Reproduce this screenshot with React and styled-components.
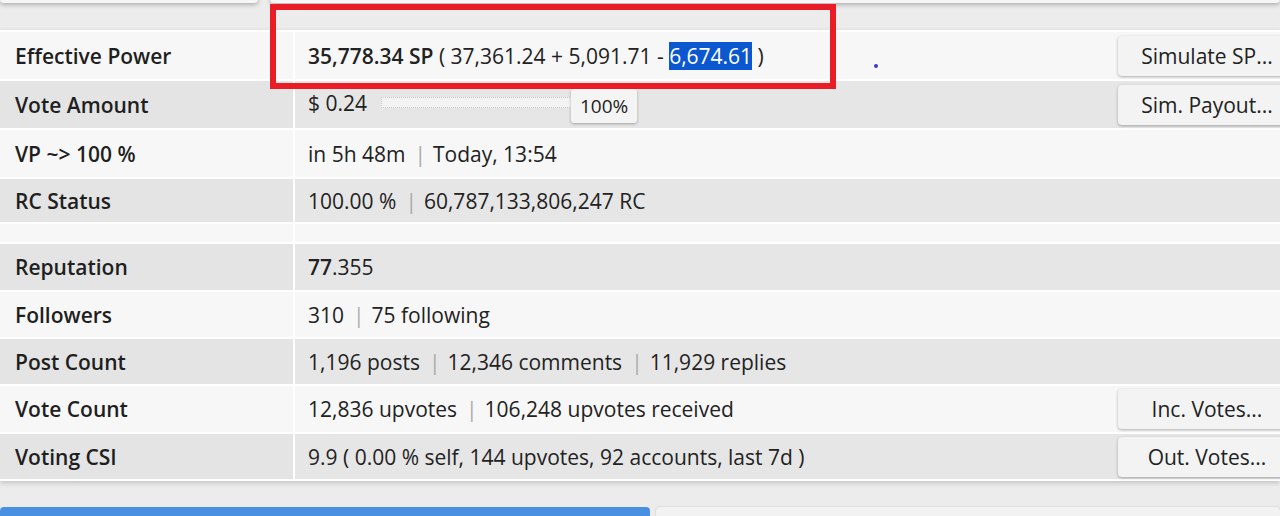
import React from 'react'
import styled, { createGlobalStyle } from 'styled-components';

const Global = createGlobalStyle`
    html, body{
        margin:0;
        padding:0;
        background:#ececec;
        overflow:hidden;
    }
    body{
        font-family:"Open Sans","Noto Sans",sans-serif;
        color:#222;
    }
`;

const rows = [
    { label: 'Effective Power', h: 47, light: true, button: 'Simulate SP...', kind: 'power' },
    { label: 'Vote Amount', h: 47, button: 'Sim. Payout...', kind: 'vote' },
    { label: 'VP ~> 100 %', h: 47, light: true, parts: ['in 5h 48m', 'Today, 13:54'] },
    { label: 'RC Status', h: 43, parts: ['100.00 %', '60,787,133,806,247 RC'] },
    { spacer: true, h: 18, light: true },
    { label: 'Reputation', h: 46, kind: 'rep' },
    { label: 'Followers', h: 45, light: true, parts: ['310', '75 following'] },
    { label: 'Post Count', h: 45, parts: ['1,196 posts', '12,346 comments', '11,929 replies'] },
    { label: 'Vote Count', h: 46, light: true, parts: ['12,836 upvotes', '106,248 upvotes received'], button: 'Inc. Votes...' },
    { label: 'Voting CSI', h: 45, parts: ['9.9 ( 0.00 % self, 144 upvotes, 92 accounts, last 7d )'], button: 'Out. Votes...' },
];

const Parts = ({ parts }) => (
    <span>
        {parts.map((p, i) => (
            <React.Fragment key={i}>
                {i > 0 && <Sep>|</Sep>}
                {p}
            </React.Fragment>
        ))}
    </span>
);

const Value = ({ row }) => {
    if (row.kind === 'power') {
        return (
            <span>
                <b>35,778.34 SP</b> ( 37,361.24 + 5,091.71 - <Selected>6,674.61</Selected> )
            </span>
        );
    }
    if (row.kind === 'vote') {
        return (
            <VoteWrap>
                <span>$ 0.24</span>
                <Slider>
                    <Track />
                    <Thumb>100%</Thumb>
                </Slider>
            </VoteWrap>
        );
    }
    if (row.kind === 'rep') {
        return <span><b>77</b>.355</span>;
    }
    if (row.parts) return <Parts parts={row.parts} />;
    return null;
};

const App = () => {
    return (
        <Page>
            <Global />
            <TopRow>
                <TopCard $w={258} />
                <TopCard $grow />
            </TopRow>
            <Card>
                {rows.map((row, i) => (
                    <Row key={i} $h={row.h}>
                        <Label $light={row.light}>{row.label}</Label>
                        <Cell $light={row.light}>
                            <Value row={row} />
                            {row.button && <Button>{row.button}</Button>}
                        </Cell>
                    </Row>
                ))}
            </Card>
            <BottomRow>
                <Progress />
                <BottomRest />
            </BottomRow>
            <Highlight />
            <Dot />
        </Page>
    )
}

export default App

const Page = styled.div`
    position:relative;
    width:1280px;
    height:516px;
    overflow:hidden;
`;
const TopRow = styled.div`
    display:flex;
    gap:12px;
    margin-top:-40px;
    height:43px;
`;
const TopCard = styled.div`
    width:${p => p.$w ? p.$w + 'px' : 'auto'};
    flex:${p => p.$grow ? 1 : 'none'};
    background:#f6f6f6;
    border-radius:0 0 4px 4px;
    box-shadow:0 2px 4px rgba(0,0,0,.25);
`;
const Card = styled.div`
    margin-top:27px;
    padding:2px 0 2px 0;
    background:#fff;
    display:flex;
    flex-direction:column;
    gap:2px;
    box-shadow:0 2px 5px rgba(0,0,0,.18);
`;
const Row = styled.div`
    display:grid;
    grid-template-columns:293px 1fr;
    gap:2px;
    height:${p => p.$h}px;
`;
const Label = styled.div`
    display:flex;
    align-items:center;
    padding-left:15px;
    font-size:21px;
    font-weight:600;
    color:#1f1f1f;
    background:${p => p.$light ? '#f7f7f7' : '#e4e4e4'};
`;
const Cell = styled.div`
    display:flex;
    align-items:center;
    padding-left:13px;
    font-size:21px;
    color:#222;
    background:${p => p.$light ? '#f7f7f7' : '#e6e6e6'};
    white-space:nowrap;
    b{
        font-weight:600;
    }
`;
const Sep = styled.span`
    color:#aaa;
    margin:0 7px 0 9px;
`;
const Selected = styled.span`
    background:#0b57d0;
    color:#fff;
`;
const VoteWrap = styled.div`
    display:flex;
    align-items:center;
    gap:14px;
    margin-top:-4px;
`;
const Slider = styled.div`
    display:flex;
    align-items:center;
    width:256px;
`;
const Track = styled.div`
    width:190px;
    height:9px;
    border:1px dotted #c8c8c8;
    background:#f3f3f3;
`;
const Thumb = styled.div`
    width:66px;
    height:34px;
    margin-left:-1px;
    margin-top:6px;
    display:flex;
    align-items:center;
    justify-content:center;
    font-size:19px;
    background:#f4f4f4;
    border-radius:3px;
    box-shadow:0 1px 3px rgba(0,0,0,.3);
`;
const Button = styled.div`
    margin-left:auto;
    margin-right:-16px;
    width:178px;
    height:40px;
    display:flex;
    align-items:center;
    justify-content:center;
    box-sizing:border-box;
    font-size:21px;
    color:#222;
    background:#f3f3f3;
    border-radius:4px;
    box-shadow:0 1px 3px rgba(0,0,0,.3);
`;
const BottomRow = styled.div`
    display:flex;
    gap:6px;
    margin-top:26px;
`;
const Progress = styled.div`
    width:650px;
    height:14px;
    border-radius:4px 4px 0 0;
    background:#4a90e2;
`;
const BottomRest = styled.div`
    flex:1;
    height:14px;
    border-radius:4px 4px 0 0;
    background:#f2f2f2;
    box-shadow:0 0 2px rgba(0,0,0,.2);
`;
const Highlight = styled.div`
    position:absolute;
    left:270px;
    top:4px;
    width:566px;
    height:85px;
    box-sizing:border-box;
    border:6px solid #e81d25;
`;
const Dot = styled.div`
    position:absolute;
    left:874px;
    top:64px;
    width:4px;
    height:4px;
    border-radius:50%;
    background:#3a3ad0;
`;
